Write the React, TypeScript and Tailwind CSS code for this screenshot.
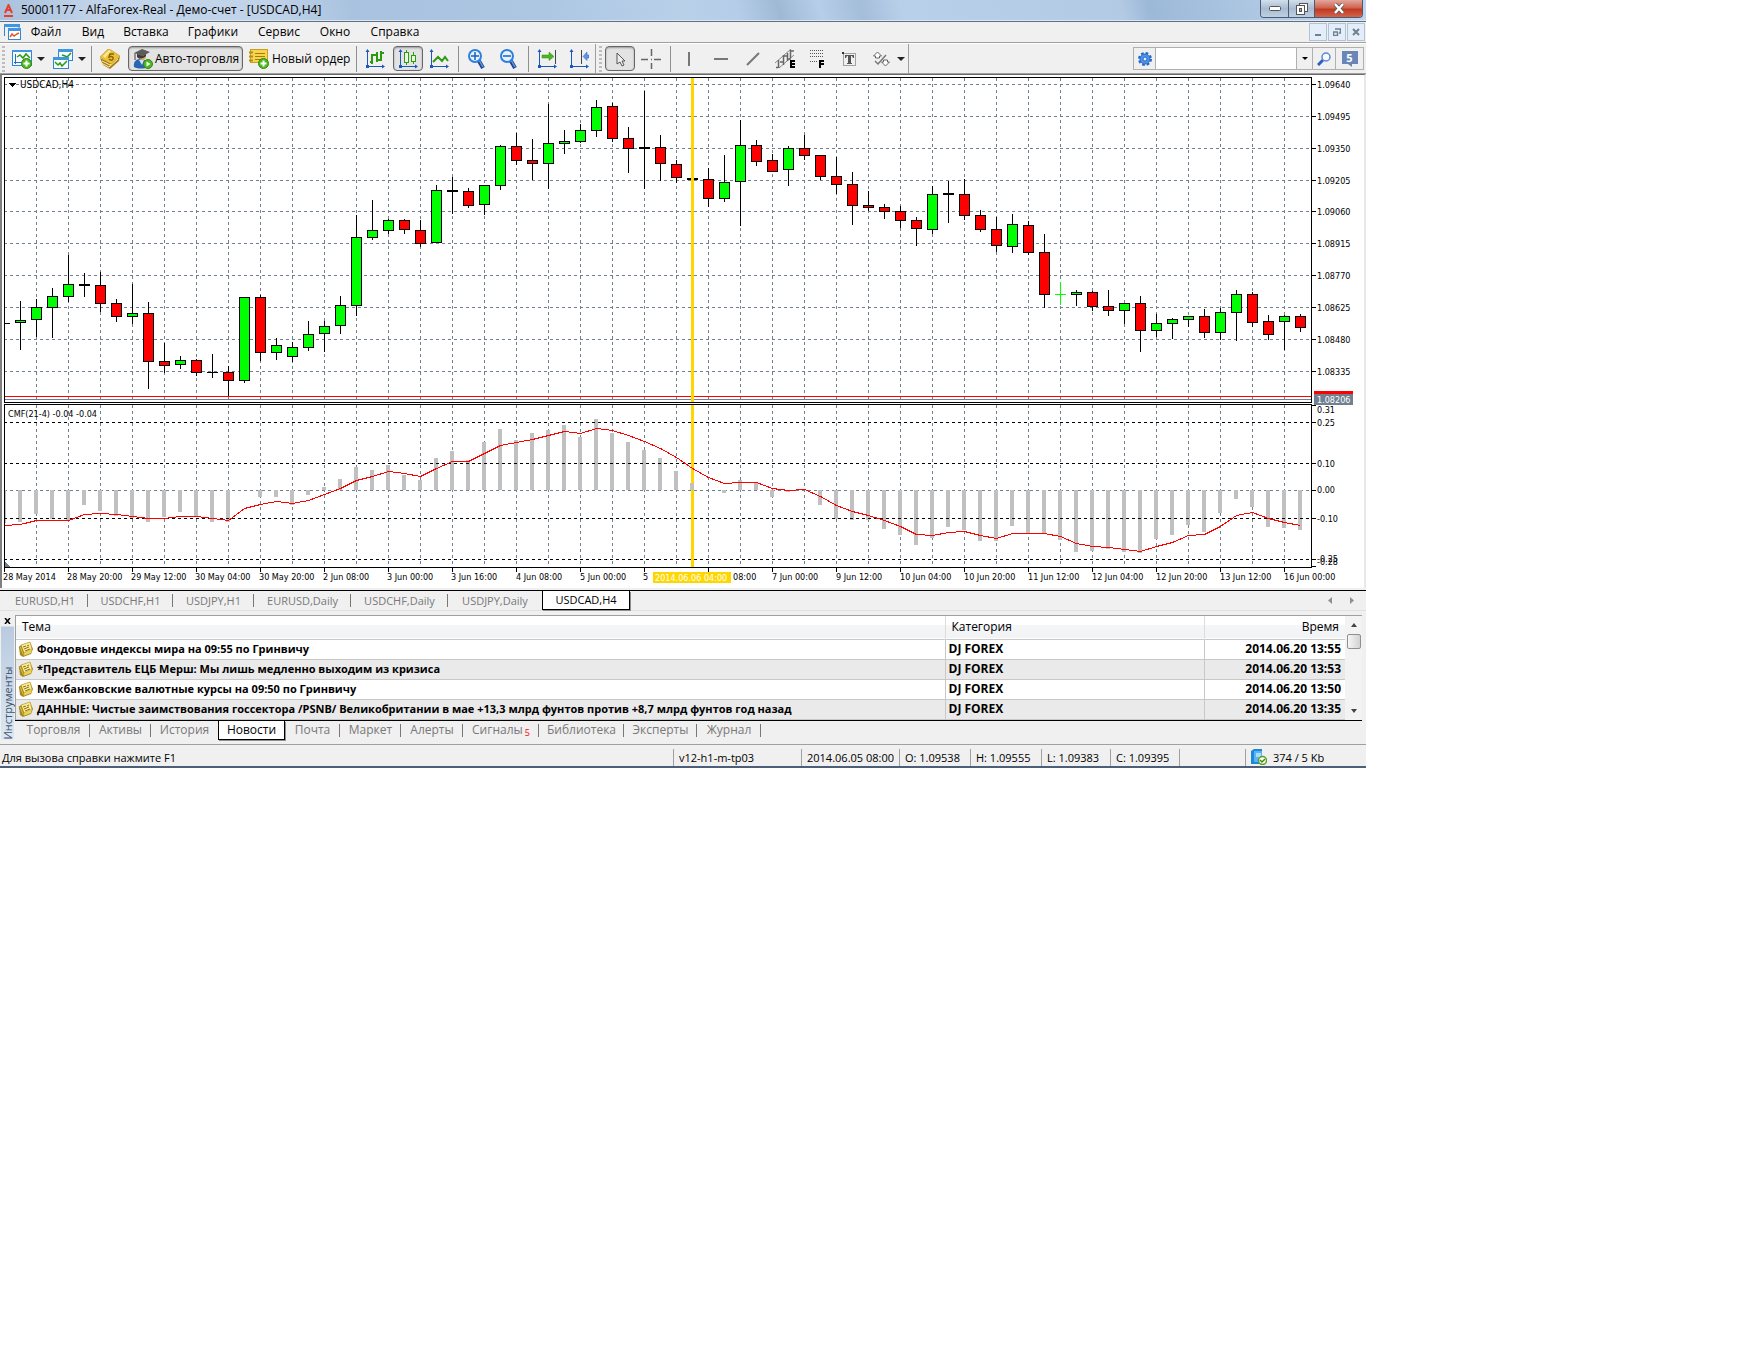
import React, { useState } from 'react';

// [high, body top, body bottom, low, kind]
type Candle = [number, number, number, number, 'u' | 'd' | 'n' | 'g'];

const candles: Candle[] = [
    [301, 320, 323, 350, 'u'], [299, 307, 320, 337, 'u'], [288, 296, 308, 338, 'u'], [255, 284, 297, 302, 'u'],
    [273, 284, 286, 297, 'n'], [272, 285, 304, 312, 'd'], [299, 303, 317, 322, 'd'], [284, 313, 317, 324, 'u'],
    [302, 313, 362, 389, 'd'], [343, 361, 366, 373, 'd'], [356, 360, 365, 369, 'u'], [359, 360, 373, 376, 'd'],
    [354, 372, 373, 378, 'n'], [366, 372, 381, 397, 'd'], [297, 297, 381, 383, 'u'], [295, 297, 353, 361, 'd'],
    [338, 345, 353, 360, 'u'], [342, 347, 357, 362, 'u'], [321, 334, 348, 351, 'u'], [321, 326, 334, 352, 'u'],
    [296, 305, 326, 334, 'u'], [215, 237, 306, 316, 'u'], [200, 230, 238, 240, 'u'], [219, 220, 231, 234, 'u'],
    [219, 220, 230, 234, 'd'], [220, 230, 244, 247, 'd'], [185, 190, 243, 243, 'u'], [177, 190, 192, 214, 'n'],
    [188, 191, 206, 208, 'd'], [185, 185, 205, 215, 'u'], [145, 146, 186, 190, 'u'], [133, 146, 161, 165, 'd'],
    [139, 160, 164, 180, 'd'], [104, 143, 164, 189, 'u'], [130, 141, 144, 154, 'u'], [124, 130, 142, 143, 'u'],
    [100, 107, 131, 137, 'u'], [103, 106, 139, 142, 'd'], [127, 138, 149, 173, 'd'], [91, 147, 149, 189, 'n'],
    [135, 147, 164, 181, 'd'], [160, 164, 178, 183, 'd'], [178, 178, 180, 180, 'n'], [168, 179, 199, 207, 'd'],
    [155, 182, 199, 202, 'u'], [120, 145, 182, 226, 'u'], [140, 145, 162, 166, 'd'], [154, 160, 172, 172, 'd'],
    [146, 148, 170, 186, 'u'], [135, 148, 156, 160, 'd'], [155, 155, 177, 180, 'd'], [157, 176, 185, 194, 'd'],
    [172, 184, 206, 225, 'd'], [191, 205, 208, 211, 'd'], [204, 207, 212, 219, 'd'], [206, 211, 221, 228, 'd'],
    [217, 220, 229, 246, 'd'], [186, 194, 230, 234, 'u'], [181, 193, 195, 223, 'n'], [179, 194, 216, 220, 'd'],
    [210, 215, 230, 232, 'd'], [217, 229, 246, 252, 'd'], [214, 224, 247, 253, 'u'], [221, 225, 253, 255, 'd'],
    [234, 252, 295, 308, 'd'], [282, 294, 295, 305, 'g'], [290, 292, 295, 306, 'u'], [291, 292, 307, 311, 'd'],
    [290, 306, 311, 316, 'd'], [303, 303, 311, 324, 'u'], [296, 303, 331, 352, 'd'], [314, 323, 331, 337, 'u'],
    [318, 319, 324, 339, 'u'], [316, 316, 320, 327, 'u'], [309, 316, 333, 338, 'd'], [308, 312, 333, 340, 'u'],
    [290, 294, 313, 341, 'u'], [292, 294, 323, 327, 'd'], [315, 321, 335, 340, 'd'], [315, 316, 322, 350, 'u'],
    [314, 316, 328, 332, 'd'],
];

const cmfBars = [
    522, 514, 519, 520, 505, 511, 516, 518, 522, 517, 512, 517, 522, 522, 490, 497, 497, 505, 495, 487,
    479, 467, 470, 465, 475, 480, 458, 451, 460, 442, 429, 440, 433, 430, 425, 437, 419, 433, 442, 450,
    458, 471, 483, 490, 493, 480, 483, 497, 492, 490, 505, 519, 520, 520, 529, 535, 545, 538, 527, 530,
    541, 541, 526, 533, 533, 540, 552, 551, 549, 552, 553, 539, 535, 525, 532, 513, 499, 507, 527, 528, 530,
];

const cmfLine = [
    524, 520, 520, 520, 514, 513, 514, 516, 518, 518, 516, 516, 518, 520, 508, 504, 501, 503, 500, 494,
    488, 480, 476, 471, 473, 476, 468, 461, 461, 453, 445, 442, 439, 435, 431, 433, 428, 430, 435, 441,
    448, 457, 468, 477, 483, 482, 482, 488, 490, 489, 496, 505, 511, 515, 520, 526, 534, 535, 532, 531,
    535, 538, 533, 533, 533, 536, 543, 546, 547, 549, 551, 546, 542, 535, 534, 526, 515, 512, 518, 522, 525,
];

const priceLevels: [number, string][] = [
    [84, '1.09640'], [116, '1.09495'], [148, '1.09350'], [180, '1.09205'], [211, '1.09060'],
    [243, '1.08915'], [275, '1.08770'], [307, '1.08625'], [339, '1.08480'], [371, '1.08335'],
];

// [x, label], the two next to the highlighted date are cut short by it
const timeLabels: [number, string][] = [
    [3, '28 May 2014'], [67, '28 May 20:00'], [131, '29 May 12:00'], [195, '30 May 04:00'], [259, '30 May 20:00'],
    [323, '2 Jun 08:00'], [387, '3 Jun 00:00'], [451, '3 Jun 16:00'], [516, '4 Jun 08:00'], [580, '5 Jun 00:00'],
    [643, '5'], [733, '08:00'], [772, '7 Jun 00:00'], [836, '9 Jun 12:00'], [900, '10 Jun 04:00'],
    [964, '10 Jun 20:00'], [1028, '11 Jun 12:00'], [1092, '12 Jun 04:00'], [1156, '12 Jun 20:00'],
    [1220, '13 Jun 12:00'], [1284, '16 Jun 00:00'],
];

const menuItems = [
    { label: 'Файл', width: 'w-[46px]' },
    { label: 'Вид', width: 'w-[48px]' },
    { label: 'Вставка', width: 'w-[58px]' },
    { label: 'Графики', width: 'w-[76px]' },
    { label: 'Сервис', width: 'w-[56px]' },
    { label: 'Окно', width: 'w-[56px]' },
    { label: 'Справка', width: 'w-[64px]' },
];

const chartTabs = [
    { label: 'EURUSD,H1', width: 'w-[86px]' },
    { label: 'USDCHF,H1', width: 'w-[85px]' },
    { label: 'USDJPY,H1', width: 'w-[81px]' },
    { label: 'EURUSD,Daily', width: 'w-[97px]' },
    { label: 'USDCHF,Daily', width: 'w-[97px]' },
    { label: 'USDJPY,Daily', width: 'w-[94px]' },
    { label: 'USDCAD,H4', width: 'w-[88px]' },
];

const toolTabs = [
    { label: 'Торговля', width: 'w-[73px]' },
    { label: 'Активы', width: 'w-[61px]' },
    { label: 'История', width: 'w-[67px]' },
    { label: 'Новости', width: 'w-[67px]' },
    { label: 'Почта', width: 'w-[55px]' },
    { label: 'Маркет', width: 'w-[61px]' },
    { label: 'Алерты', width: 'w-[62px]' },
    { label: 'Сигналы', width: 'w-[76px]', badge: '5' },
    { label: 'Библиотека', width: 'w-[85px]' },
    { label: 'Эксперты', width: 'w-[73px]' },
    { label: 'Журнал', width: 'w-[64px]' },
];

const news = [
    { title: 'Фондовые индексы мира на 09:55 по Гринвичу', time: '2014.06.20 13:55' },
    { title: '*Представитель ЕЦБ Мерш: Мы лишь медленно выходим из кризиса', time: '2014.06.20 13:53' },
    { title: 'Межбанковские валютные курсы на 09:50 по Гринвичу', time: '2014.06.20 13:50' },
    {
        title: 'ДАННЫЕ: Чистые заимствования госсектора /PSNB/ Великобритании в мае +13,3 млрд фунтов против +8,7 млрд фунтов год назад',
        time: '2014.06.20 13:35',
    },
];

interface IconProps {
    size?: number;
    children: React.ReactNode;
}

const Icon: React.FC<IconProps> = ({ size = 20, children }) => (
    <svg width={size} height={size} viewBox={`0 0 ${size} ${size}`} fill="none" className="shrink-0" aria-hidden="true">
        {children}
    </svg>
);

const PlusBadge: React.FC = () => (
    <>
        <circle cx="14.5" cy="14.5" r="5" fill="#4cb81f" stroke="#2f8a10" />
        <path d="M14.5 11.5v6M11.5 14.5h6" stroke="#fff" strokeWidth="2" />
    </>
);

const Axes: React.FC = () => (
    <>
        <path d="M2.5 2v17M1 17.5h18" stroke="#1c56c0" />
        <path d="M2.5 0l2 3h-4zM20 17.5l-3-2v4zM1 16h3v3H1z" fill="#1c56c0" />
    </>
);

const NewChartIcon = () => (
    <Icon>
        <rect x="0.5" y="1.5" width="19" height="15" fill="#f4faff" stroke="#2f86d6" />
        <path d="M0 1h20v2H0z" fill="#3f97e4" />
        <path d="M3.5 5v10M2 13.5h15" stroke="#2b6fc4" />
        <path d="M5 8l3-2 3 3 3-4 4 4" stroke="#2e9a10" strokeWidth="1.5" />
        <PlusBadge />
    </Icon>
);

const ProfilesIcon = () => (
    <Icon>
        <rect x="5.5" y="0.5" width="14" height="11" fill="#f4faff" stroke="#2f86d6" />
        <path d="M5 0h15v3H5z" fill="#3f97e4" />
        <path d="M9 6l3 1 2 1 4-4" stroke="#2e9a10" strokeWidth="1.5" />
        <rect x="0.5" y="8.5" width="15" height="11" fill="#f4faff" stroke="#2f86d6" />
        <path d="M0 8h16v3H0z" fill="#3f97e4" />
        <path d="M2 13l3 3 2-2 2 3 5-5" stroke="#2e9a10" strokeWidth="1.5" />
    </Icon>
);

const MarketIcon = () => (
    <Icon>
        <path d="M0 9l3 7 7 4 9-8 1-5-10 7z" fill="#a97a10" />
        <path d="M1 14l8 4 9-8M2 12l8 4 9-8" stroke="#fdf0b0" />
        <path d="M0 8l8-8 3 1 9 6-9 8z" fill="#ecc23a" stroke="#b58412" strokeWidth="0.5" />
        <path d="M3 7l6-6 2 1-6 7z" fill="#fae79a" />
        <path d="M14 5l-4 0-1 3c3-1 5 0 4 2s-3 1-4 0" stroke="#8d6505" strokeWidth="1.5" />
    </Icon>
);

const AutoTradeIcon = () => (
    <Icon>
        <path d="M1 18c-1-5 2-8 6-8s8 2 8 8c-4 2-10 2-14 0z" fill="#2865b5" />
        <path d="M6 11l3 5 2-5z" fill="#cfe0f5" />
        <circle cx="9" cy="7" r="4" fill="#dca469" />
        <path d="M1 4l8-4 8 3-7 4z" fill="#5c5c5c" />
        <path d="M4 5v3c3 3 7 1 9-1V5l-3 2z" fill="#3b3b3b" />
        <path d="M2 4v7" stroke="#777" strokeWidth="1.5" />
        <circle cx="15" cy="15" r="4.5" fill="#4cb81f" stroke="#2f8a10" />
        <path d="M13.5 12.5l4 2.5-4 2.5z" fill="#fff" />
    </Icon>
);

const OrderIcon = () => (
    <Icon>
        <rect x="1.5" y="0.5" width="17" height="13" fill="#f6d44c" stroke="#c89f1f" />
        <path d="M6 4.5h10M6 7.5h10M6 10.5h7" stroke="#a57c10" />
        <path d="M0 3.5h4M0 7.5h4M0 11.5h4" stroke="#b58c18" strokeWidth="2" />
        <PlusBadge />
    </Icon>
);

const BarsIcon = () => (
    <Icon>
        <Axes />
        <path d="M7 5v10M5 13h3M8 6h4M12 3v10M12 11h4M16 2v10M16 4h3" stroke="#2e9a10" strokeWidth="2" />
    </Icon>
);

const CandlesIcon = () => (
    <Icon>
        <Axes />
        <path d="M8.5 1v3M8.5 13v3M15.5 3v3M15.5 12v3" stroke="#2e9a10" />
        <rect x="6.5" y="3.5" width="4" height="10" fill="#eafbe2" stroke="#2e9a10" />
        <rect x="13.5" y="6.5" width="4" height="6" fill="#eafbe2" stroke="#2e9a10" />
    </Icon>
);

const LineIcon = () => (
    <Icon>
        <Axes />
        <path d="M4 13l5-5 4 4 3-4 3 4" stroke="#2e9a10" strokeWidth="2" />
    </Icon>
);

const ZoomIcon: React.FC<{ plus?: boolean }> = ({ plus }) => (
    <Icon>
        <path d="M12 12l4 7" stroke="#16489c" strokeWidth="4" />
        <path d="M12 11l4 7" stroke="#6d9ad8" strokeWidth="1.5" />
        <circle cx="8" cy="7" r="6" fill="#e4f3ff" stroke="#2d7fdc" strokeWidth="2" />
        <path d={plus ? 'M4 7h8M8 3v8' : 'M4 7h8'} stroke="#1f5fc0" strokeWidth="1.5" />
    </Icon>
);

const ScrollIcon = () => (
    <Icon>
        <Axes />
        <path d="M18.5 1v14" stroke="#444" />
        <path d="M5 6h7V3l5 4.5-5 4V9H5z" fill="#4cb81f" stroke="#2f8a10" strokeWidth="0.5" />
    </Icon>
);

const ShiftIcon = () => (
    <Icon>
        <Axes />
        <path d="M12.5 1v14" stroke="#444" />
        <path d="M20 6h-2V3l-4 4.5 4 4V9h2z" fill="#5b96ec" stroke="#2661c4" strokeWidth="0.5" />
    </Icon>
);

const ChannelIcon = () => (
    <Icon>
        <path d="M0 14L16 0M4 19L19 6" stroke="#888" />
        <path d="M3.5 11v8M1 18.5h2M8.5 6v10M5 13h3M9 7h3M12.5 4v8M15.5 1v8M16 2h3M13 10h3" stroke="#666" strokeWidth="1.5" />
        <path d="M15 11h5v2h-3v1h3v2h-3v1h3v2h-5z" fill="#000" />
    </Icon>
);

const FiboIcon = () => (
    <Icon>
        <path d="M3 1.500h14M3 4.500h14M3 7.500h14M3 12.500h8" stroke="#555" strokeDasharray="1 1" />
        <path d="M12 11h5v2h-3v1h3v2h-3v3h-2z" fill="#000" />
    </Icon>
);

const TextIcon = () => (
    <Icon>
        <rect x="4.5" y="4.5" width="12" height="12" stroke="#555" strokeDasharray="1 1" />
        <path d="M6 6h9v3h-1l-1-2h-1v7h1v1H8v-1h1V7H8L7 9H6z" fill="#555" />
        <path d="M3 3h2v2H3z" fill="#333" />
    </Icon>
);

const ShapesIcon = () => (
    <Icon>
        <path d="M6.500 3l4 4h-2v2h-4V7h-2z" fill="#fff" stroke="#666" />
        <path d="M4 12l3 3 8-9" stroke="#777" strokeWidth="1.5" />
        <path d="M14.500 17l-4-4h2v-2h4v2h2z" fill="#fff" stroke="#666" />
    </Icon>
);

const NoteIcon = () => (
    <Icon size={16}>
        <path d="M1 6l2-2 9-3 3 7-2 5-8 3-3-2z" fill="#a58a22" />
        <path d="M3 4l9-3 2 7-8 4z" fill="#faeb9a" stroke="#a98a1e" strokeWidth="0.500" />
        <path d="M6 12l8-4-1 4-8 3z" fill="#ecd45a" />
        <path d="M1 6l2-1 3 8-1 2z" fill="#d9bb3a" stroke="#8d7318" strokeWidth="0.5" />
        <path d="M5 6l3-1M9 5l2-1M6 8l5-2M7 10l5-2" stroke="#8a7218" />
    </Icon>
);

const Caret: React.FC = () => (
    <svg width="8" height="4" viewBox="0 0 8 4" aria-hidden="true" className="shrink-0">
        <path d="M0 0h8L4 4z" fill="#222" />
    </svg>
);

const Separator: React.FC = () => <div className="h-[26px] w-px shrink-0 bg-[#909090]" />;

const Grip: React.FC = () => (
    <div className="h-[26px] w-[3px] shrink-0 bg-[repeating-linear-gradient(180deg,#bdbdbd_0_2px,transparent_2px_4px)]" />
);

interface ToolProps {
    label: string;
    width?: string;
    active?: boolean;
    children: React.ReactNode;
}

const Tool: React.FC<ToolProps> = ({ label, width = 'w-8', active, children }) => (
    <button
        type="button"
        title={label}
        aria-label={label}
        className={`flex h-[25px] shrink-0 items-center justify-center ${width} ${
            active ? 'rounded border border-[#666] bg-[#e3e3e3] shadow-[inset_0_1px_2px_#999]' : ''
        }`}
    >
        {children}
    </button>
);

const TitleBar: React.FC = () => (
    <div className="flex h-[21px] items-start bg-[linear-gradient(75deg,#a9c1dd_0%,#c3d5ea_8%,#c0d3e9_20%,#a8c2df_26%,#adc7e3_40%,#b9d0e9_50%,#b5cde8_54%,#9fb9d5_57%,#b6cee8_60%,#a4bdd9_63%,#b9d0ea_66%,#b3cae4_82%,#9cb9d8_84%,#c0d6ee_100%)] border-b border-[#dce8f4]">
        <div className="flex h-5 flex-1 items-center pl-1">
            <svg width="9" height="13" viewBox="0 0 9 13" aria-hidden="true">
                <path d="M1 9L4.5 1L8 9M2.5 6h4M0 12h9" fill="none" stroke="#e8402e" strokeWidth="2" />
            </svg>
            <h1 className="pl-2 text-[12px] leading-4 text-black">50001177 - AlfaForex-Real - Демо-счет - [USDCAD,H4]</h1>
        </div>
        <div className="mr-[3px] flex h-[18px] overflow-hidden rounded-b border border-t-0 border-[#4c5c70] text-white">
            <button type="button" aria-label="Свернуть" className="flex w-7 items-center justify-center border-r border-[#4c5c70] bg-[linear-gradient(#d3dfec,#a8bbd0_50%,#bccfe3)]">
                <svg width="12" height="5" viewBox="0 0 12 5"><rect x="0.5" y="0.5" width="11" height="4" rx="1" fill="#fff" stroke="#555" /></svg>
            </button>
            <button type="button" aria-label="Развернуть" className="flex w-[26px] items-center justify-center border-r border-[#4c5c70] bg-[linear-gradient(#d3dfec,#a8bbd0_50%,#bccfe3)]">
                <svg width="12" height="12" viewBox="0 0 12 12">
                    <rect x="3.5" y="0.5" width="8" height="8" fill="#fff" stroke="#555" />
                    <rect x="0.5" y="2.5" width="8" height="9" fill="#fff" stroke="#555" />
                    <rect x="3.5" y="5.5" width="2" height="3" fill="#9ab" stroke="#555" />
                </svg>
            </button>
            <button type="button" aria-label="Закрыть" className="flex w-[47px] items-center justify-center bg-[linear-gradient(#e3a79c,#d06450_45%,#c03a20_55%,#d4634c)]">
                <svg width="12" height="11" viewBox="0 0 12 11">
                    <path d="M2 1l8 9M10 1L2 10" stroke="#555" strokeWidth="4" />
                    <path d="M2 1l8 9M10 1L2 10" stroke="#fff" strokeWidth="2.5" />
                </svg>
            </button>
        </div>
    </div>
);

const mdiButton = 'flex h-[18px] w-[18px] items-center justify-center border border-[#b4c3d1] bg-[#e3eefa]';

const MenuBar: React.FC = () => (
    <nav className="flex h-[22px] items-center border-t border-b border-t-[#5f6f80] border-b-[#a0a0a0] bg-[#f0f0f0] pl-1">
        <svg width="17" height="16" viewBox="0 0 17 16" aria-hidden="true">
            <path d="M0.5 12V0.5H15V4" fill="none" stroke="#2f86d6" />
            <path d="M0 0h16v3H0z" fill="#3f97e4" />
            <rect x="4.5" y="5.5" width="12" height="10" fill="#fff" stroke="#2f86d6" />
            <path d="M4 4h13v3H4z" fill="#3f97e4" />
            <path d="M6 13l2-3 2 2 3-2 2-1" fill="none" stroke="#e8562a" strokeWidth="1.5" />
        </svg>
        <div className="ml-0.5 flex flex-1">
            {menuItems.map((item) => (
                <button key={item.label} type="button" className={`text-center text-[12px] leading-4 ${item.width}`}>
                    {item.label}
                </button>
            ))}
        </div>
        <div className="flex gap-px pr-px">
            <button type="button" aria-label="Свернуть окно" className={mdiButton}>
                <svg width="8" height="8" viewBox="0 0 8 8"><path d="M1 6h6v2H1z" fill="#6f8090" /></svg>
            </button>
            <button type="button" aria-label="Восстановить окно" className={mdiButton}>
                <svg width="8" height="8" viewBox="0 0 8 8"><path d="M2 1h6M7.5 1v4H6M0 4h5M0.5 4v3.5h4V4" fill="none" stroke="#6f8090" strokeWidth="1.5" /></svg>
            </button>
            <button type="button" aria-label="Закрыть окно" className={mdiButton}>
                <svg width="8" height="8" viewBox="0 0 8 8"><path d="M1 1l6 6M7 1L1 7" stroke="#6f8090" strokeWidth="2" /></svg>
            </button>
        </div>
    </nav>
);

const Toolbar: React.FC = () => (
    <div className="flex h-[31px] items-center border-t border-b border-t-white border-b-[#a0a0a0] bg-[#f0f0f0]">
        <div className="flex h-full items-center border-r border-[#a0a0a0] pl-0.5">
            <Grip />
            <div className="w-[3px]" />
            <Tool label="Новый график" width="w-7"><NewChartIcon /></Tool>
            <Tool label="Список графиков" width="w-[9px]"><Caret /></Tool>
            <div className="w-1" />
            <Tool label="Профили" width="w-7"><ProfilesIcon /></Tool>
            <Tool label="Список профилей" width="w-[9px]"><Caret /></Tool>
            <div className="w-[5px]" />
            <Separator />
            <Tool label="Маркет" width="w-9"><MarketIcon /></Tool>
            <button type="button" className="flex h-[25px] w-[115px] items-center gap-0.5 rounded border border-[#666] bg-[#e3e3e3] pl-1 text-[12px] leading-4 whitespace-nowrap shadow-[inset_0_1px_2px_#999]">
                <AutoTradeIcon />
                Авто-торговля
            </button>
            <button type="button" className="flex h-[25px] w-[113px] items-center gap-[3px] pl-1.5 text-[12px] leading-4 whitespace-nowrap">
                <OrderIcon />
                Новый ордер
            </button>
            <Separator />
            <Tool label="Бары" width="w-9"><BarsIcon /></Tool>
            <Tool label="Свечи" width="w-[30px]" active><CandlesIcon /></Tool>
            <Tool label="Линия"><LineIcon /></Tool>
            <div className="w-[3px]" />
            <Separator />
            <Tool label="Увеличить" width="w-9"><ZoomIcon plus /></Tool>
            <Tool label="Уменьшить" width="w-7"><ZoomIcon /></Tool>
            <div className="w-[5px]" />
            <Separator />
            <div className="w-0.5" />
            <Tool label="Автопрокрутка"><ScrollIcon /></Tool>
            <Tool label="Сдвиг графика"><ShiftIcon /></Tool>
        </div>
        <div className="flex h-full items-center border-r border-[#a0a0a0] pl-[3px]">
            <Grip />
            <div className="w-[3px]" />
            <Tool label="Курсор" width="w-[30px]" active>
                <Icon>
                    <path d="M7 4v11l3-2 2 4 2-1-2-4h3z" fill="#eee" stroke="#555" />
                </Icon>
            </Tool>
            <Tool label="Перекрестие">
                <Icon>
                    <path d="M0 10.5h7M13 10.5h7M10.5 0v7M10.5 14v6M10 10.5h1" stroke="#666" strokeWidth="1.5" />
                </Icon>
            </Tool>
            <div className="w-[3px]" />
            <Separator />
            <div className="w-0.5" />
            <Tool label="Вертикальная линия"><Icon><path d="M10 3v14" stroke="#777" strokeWidth="2" /></Icon></Tool>
            <Tool label="Горизонтальная линия"><Icon><path d="M3 10h14" stroke="#777" strokeWidth="2" /></Icon></Tool>
            <Tool label="Трендовая линия"><Icon><path d="M4 16L16 4" stroke="#777" strokeWidth="2" /></Icon></Tool>
            <Tool label="Каналы"><ChannelIcon /></Tool>
            <Tool label="Фибоначчи"><FiboIcon /></Tool>
            <Tool label="Текст"><TextIcon /></Tool>
            <Tool label="Фигуры"><ShapesIcon /></Tool>
            <Tool label="Список фигур" width="w-[7px]"><Caret /></Tool>
            <div className="w-1" />
        </div>
        <div className="flex flex-1 justify-end pr-0.5">
            <div className="flex h-[23px] border border-[#b0b0b0] text-black">
                <button type="button" aria-label="Параметры поиска" className="flex w-[22px] items-center justify-center border-r border-[#b0b0b0]">
                    <svg width="14" height="14" viewBox="0 0 14 14" aria-hidden="true">
                        <circle cx="7" cy="7" r="6" fill="none" stroke="#2468c8" strokeWidth="2" strokeDasharray="2.7 2" />
                        <circle cx="7" cy="7" r="5" fill="#4f94ea" stroke="#2468c8" />
                        <circle cx="7" cy="7" r="2" fill="#f0f0f0" stroke="#2468c8" />
                    </svg>
                </button>
                <input type="text" aria-label="Поиск" className="w-[141px] border-r border-[#b0b0b0] bg-white px-1 text-[12px] outline-none" />
                <button type="button" aria-label="История поиска" className="flex w-4 items-center justify-center border-r border-[#b0b0b0]">
                    <svg width="6" height="3" viewBox="0 0 6 3"><path d="M0 0h6L3 3z" fill="#000" /></svg>
                </button>
                <button type="button" aria-label="Найти" className="flex w-[23px] items-center justify-center border-r border-[#b0b0b0]">
                    <svg width="14" height="14" viewBox="0 0 14 14">
                        <path d="M1 13l5-5" stroke="#2b5fc0" strokeWidth="3" />
                        <circle cx="9" cy="5" r="4" fill="#f4faff" stroke="#5f86d4" strokeWidth="1.5" />
                    </svg>
                </button>
                <button type="button" aria-label="Сообщения" className="flex w-[27px] flex-col items-center justify-center">
                    <span className="h-[13px] w-4 bg-[#6a86b8] text-center text-[11px] leading-[13px] font-bold text-white">5</span>
                    <svg width="4" height="3" viewBox="0 0 4 3" aria-hidden="true"><path d="M0 0h4v3z" fill="#6a86b8" /></svg>
                </button>
            </div>
        </div>
    </div>
);

const barX = (i: number) => 20 + i * 16;

const Chart: React.FC = () => {
    const gridX = Array.from({ length: 40 }, (_, i) => 36 + i * 32);
    const linePoints = `4.5,525.5 ${cmfLine.map((y, i) => `${barX(i) + 0.5},${y + 0.5}`).join(' ')}`;

    return (
        <div className="border-t border-r-2 border-l-2 border-t-[#696969] border-r-[#e8e8e8] border-l-[#808080] bg-white">
            <svg viewBox="2 75 1362 513" className="block w-full font-['DejaVu_Sans_Condensed','DejaVu_Sans',sans-serif] text-[9px]" role="img" aria-label="USDCAD,H4">
                <g shapeRendering="crispEdges" fill="none">
                    <g stroke="#708090" strokeDasharray="3 3">
                        {priceLevels.map(([y]) => (
                            <path key={y} d={`M4 ${y}.5H1311`} />
                        ))}
                        {gridX.map((x) => (
                            <path key={x} d={`M${x}.5 78V402M${x}.5 405V567`} />
                        ))}
                        <path d="M4 490.5H1311" />
                    </g>
                    <path d="M4 399.5H1311" stroke="#708090" />

                    <path d="M5 323.5H10" stroke="#000" />
                    {candles.map(([high, top, bottom, low, kind], i) => {
                        const x = barX(i);
                        const line = kind === 'g' ? '#00ff00' : '#000';
                        const solid = kind === 'n' || kind === 'g';
                        return (
                            <g key={i}>
                                <rect x={x} y={high} width="1" height={low - high} fill={line} />
                                <rect x={x - 5} y={top} width="11" height={bottom - top} fill={line} />
                                {!solid && (
                                    <rect x={x - 4} y={top + 1} width="9" height={bottom - top - 2} fill={kind === 'u' ? '#00ff00' : '#ff0000'} />
                                )}
                            </g>
                        );
                    })}
                    <path d="M4 396.5H1311" stroke="#ff0000" />

                    <rect x="691" y="78" width="3" height="324" fill="#ffd700" />
                    <rect x="691" y="405" width="3" height="162" fill="#ffd700" />

                    <rect x="5" y="490" width="1" height="33" fill="#c0c0c0" />
                    {cmfBars.map((y, i) => (
                        <rect key={i} x={barX(i) - 2} y={Math.min(y, 490)} width="4" height={Math.abs(y - 490)} fill="#c0c0c0" />
                    ))}
                    {[422, 463, 518, 559].map((y) => (
                        <path key={y} d={`M4 ${y}.5H1311`} stroke="#000" strokeDasharray="3 3" />
                    ))}
                    <polyline points={linePoints} stroke="#ff0000" />

                    <path d="M4.5 402V77.5H1311.5V402.5H4M4.5 567V404.5H1311.5V567.5H4" stroke="#000" />
                    <path d="M5 562l5 5H5z" fill="#708090" />
                    {[...priceLevels.map(([y]) => y), 405, 422, 463, 490, 518, 559, 566].map((y) => (
                        <path key={y} d={`M1312 ${y}.5h4`} stroke="#000" />
                    ))}
                    {timeLabels.map(([x], i) => (
                        <path key={x} d={`M${4 + i * 64}.5 568v4`} stroke="#000" />
                    ))}
                    <path d="M8 83h8l-4 4z" fill="#000" />
                </g>

                <text x="20" y="88" fontSize="10">USDCAD,H4</text>
                <text x="8" y="417">CMF(21-4) -0.04 -0.04</text>
                {priceLevels.map(([y, label]) => (
                    <text key={label} x="1317" y={y + 4}>{label}</text>
                ))}
                <rect x="1314" y="391" width="39" height="10" fill="#ff0000" />
                <rect x="1314" y="394" width="39" height="11" fill="#708090" />
                <text x="1317" y="403" fill="#fff">1.08206</text>
                <text x="1317" y="413">0.31</text>
                <text x="1317" y="426">0.25</text>
                <text x="1317" y="467">0.10</text>
                <text x="1317" y="493">0.00</text>
                <text x="1317" y="522">-0.10</text>
                <text x="1317" y="562">-0.25</text>
                <text x="1317" y="565">-0.28</text>
                {timeLabels.map(([x, label]) => (
                    <text key={label} x={x} y="580">{label}</text>
                ))}
                <rect x="653" y="572" width="78" height="11" fill="#ffd700" />
                <text x="655" y="581" fill="#fff">2014.06.06 04:00</text>
            </svg>
        </div>
    );
};

interface TabStripProps {
    tabs: { label: string; width: string; badge?: string }[];
    active: string;
    onSelect: (label: string) => void;
    textSize: string;
}

const TabStrip: React.FC<TabStripProps> = ({ tabs, active, onSelect, textSize }) => {
    const activeIndex = tabs.findIndex((tab) => tab.label === active);

    return (
        <div className="flex" role="tablist">
            {tabs.map((tab, i) => (
                <button
                    key={tab.label}
                    type="button"
                    role="tab"
                    aria-selected={i === activeIndex}
                    onClick={() => onSelect(tab.label)}
                    className={`relative flex h-[19px] items-center justify-center leading-4 ${textSize} ${tab.width} ${
                        i === activeIndex ? 'border-r border-b border-l border-black bg-white text-black shadow-[1px_1px_0_#909090]' : 'text-[#787878]'
                    }`}
                >
                    {tab.label}
                    {tab.badge && <span className="pt-1.5 pl-0.5 text-[9px] leading-3 text-[#ff0000]">{tab.badge}</span>}
                    {i !== activeIndex && i !== activeIndex - 1 && <span className="absolute top-[3px] right-0 h-[13px] w-px bg-[#787878]" />}
                </button>
            ))}
        </div>
    );
};

const ChartTabs: React.FC = () => {
    const [active, setActive] = useState('USDCAD,H4');

    return (
        <div className="border-b border-[#e0e0e0] bg-[#f0f0f0] pt-0.5">
            <div className="flex h-[20px] items-start border-t border-black pl-[2px]">
                <TabStrip tabs={chartTabs} active={active} onSelect={setActive} textSize="text-[11px]" />
                <div className="flex flex-1 items-center justify-end gap-[18px] pt-1.5 pr-3">
                    <button type="button" aria-label="Назад"><svg width="4" height="7" viewBox="0 0 4 7"><path d="M4 0v7L0 3.5z" fill="#909090" /></svg></button>
                    <button type="button" aria-label="Вперед"><svg width="4" height="7" viewBox="0 0 4 7"><path d="M0 0v7l4-3.5z" fill="#909090" /></svg></button>
                </div>
            </div>
        </div>
    );
};

const Toolbox: React.FC = () => {
    const [active, setActive] = useState('Новости');

    return (
        <section className="flex border-b border-[#a0a0a0] bg-[#f0f0f0] pt-[4px] pr-[4px]">
            <div className="flex w-[15px] shrink-0 flex-col items-center">
                <button type="button" aria-label="Закрыть панель" className="flex h-[12px] items-center">
                    <svg width="7" height="6" viewBox="0 0 7 6"><path d="M1 0l5 6M6 0L1 6" stroke="#000" strokeWidth="1.5" /></svg>
                </button>
                <div className="mb-1 flex w-[13px] flex-1 items-center justify-start bg-[linear-gradient(#dbe7f4,#bacbdf)] text-[11px] leading-[13px] text-[#44546a] [writing-mode:vertical-rl] rotate-180">
                    Инструменты
                </div>
            </div>
            <div className="flex-1">
                <div className="flex border-t border-l border-[#a0a0a0] bg-white">
                    <table className="w-full flex-1 table-fixed border-collapse text-[12px] leading-4">
                        <colgroup>
                            <col />
                            <col className="w-[259px]" />
                            <col className="w-[141px]" />
                        </colgroup>
                        <thead>
                            <tr className="h-[23px] border-b border-[#c8c8c8] bg-[linear-gradient(#fff_40%,#f5f6f8_41%,#f2f3f5)]">
                                <th className="pl-1.5 text-left font-normal">Тема</th>
                                <th className="border-l border-[#dcdcdc] pl-1.5 text-left font-normal">Категория</th>
                                <th className="border-l border-[#dcdcdc] pr-1.5 text-right font-normal">Время</th>
                            </tr>
                        </thead>
                        <tbody>
                            {news.map((item) => (
                                <tr key={item.title} className="h-[20px] border-b border-[#c8c8c8] odd:bg-white even:bg-[#eaeaea]">
                                    <td className="overflow-hidden pl-0.5 whitespace-nowrap">
                                        <div className="flex items-center gap-[3px] text-[11px] font-bold">
                                            <NoteIcon />
                                            {item.title}
                                        </div>
                                    </td>
                                    <td className="border-l border-[#c8c8c8] pl-[3px] font-bold">DJ FOREX</td>
                                    <td className="border-l border-[#c8c8c8] pr-1 text-right font-bold">{item.time}</td>
                                </tr>
                            ))}
                        </tbody>
                    </table>
                    <div className="flex w-[17px] shrink-0 flex-col items-center justify-between bg-[#f3f3f3]">
                        <div className="flex flex-col items-center">
                            <button type="button" aria-label="Вверх" className="flex h-[18px] w-4 items-center justify-center">
                                <svg width="6" height="4" viewBox="0 0 6 4"><path d="M3 0l3 4H0z" fill="#444" /></svg>
                            </button>
                            <div className="h-[15px] w-[14px] rounded-xs border border-[#8f8f8f] bg-[linear-gradient(90deg,#f6f6f6,#d2d2d4)]" />
                        </div>
                        <button type="button" aria-label="Вниз" className="flex h-[17px] w-4 items-center justify-center">
                            <svg width="6" height="4" viewBox="0 0 6 4"><path d="M0 0h6L3 4z" fill="#444" /></svg>
                        </button>
                    </div>
                </div>
                <div className="h-[24px] border-t border-black pl-[2px]">
                    <TabStrip tabs={toolTabs} active={active} onSelect={setActive} textSize="text-[12px]" />
                </div>
            </div>
        </section>
    );
};

const StatusBar: React.FC = () => (
    <footer className="flex h-[23px] items-end border-b-2 border-[#4d5f78] bg-[#f0f0f0] text-[11px] leading-[17px]">
        <div className="flex-1 pl-0.5">Для вызова справки нажмите F1</div>
        <div className="w-[128px] border-l border-[#a0a0a0] pl-[5px]">v12-h1-m-tp03</div>
        <div className="w-[98px] border-l border-[#a0a0a0] pl-[5px]">2014.06.05 08:00</div>
        <div className="w-[71px] border-l border-[#a0a0a0] pl-[5px]">O: 1.09538</div>
        <div className="w-[71px] border-l border-[#a0a0a0] pl-[5px]">H: 1.09555</div>
        <div className="w-[69px] border-l border-[#a0a0a0] pl-[5px]">L: 1.09383</div>
        <div className="w-[69px] border-l border-[#a0a0a0] pl-[5px]">C: 1.09395</div>
        <div className="h-[17px] w-[66px] border-l border-[#a0a0a0]" />
        <div className="flex w-[121px] items-center gap-1.5 border-l border-[#a0a0a0] pl-1">
            <svg width="17" height="16" viewBox="0 0 17 16" aria-hidden="true">
                <path d="M1 2l3-2h8v12l-3 3H1z" fill="#1d87d8" />
                <path d="M4 2h8v11H4z" fill="#58b4f4" />
                <path d="M6 5h5M6 7h5" stroke="#fff" />
                <circle cx="12.5" cy="11.5" r="4" fill="#fff" stroke="#58a020" strokeWidth="1.5" />
                <path d="M10 11l2 2 3-3" fill="none" stroke="#3f8a10" strokeWidth="1.5" />
            </svg>
            374 / 5 Kb
        </div>
    </footer>
);

const App: React.FC = () => {
    return (
        <main className="w-full max-w-[1366px] overflow-hidden bg-[#f0f0f0] font-['Open_Sans','Noto_Sans',sans-serif] text-black">
            <TitleBar />
            <MenuBar />
            <Toolbar />
            <Chart />
            <ChartTabs />
            <Toolbox />
            <StatusBar />
        </main>
    );
};

export default App;
